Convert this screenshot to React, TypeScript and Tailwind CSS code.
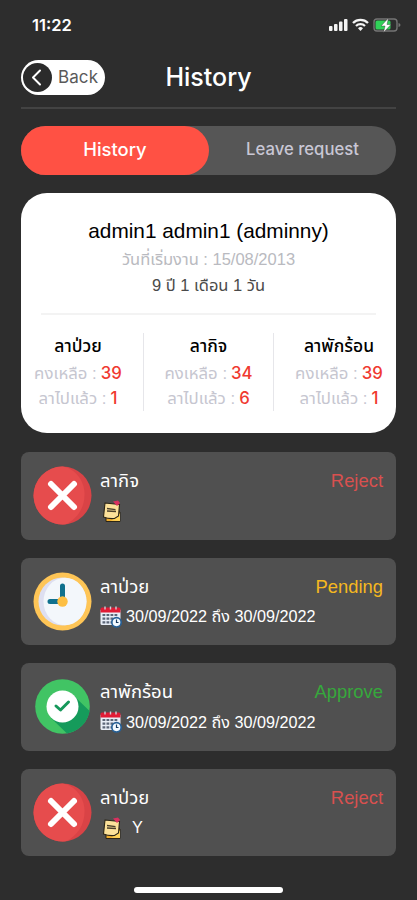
import React from 'react';

const thai = "font-['Liberation_Sans','Noto_Sans_Thai','Noto_Sans',sans-serif]";
const inter = "font-['Inter','Noto_Sans',sans-serif]";

type Status = 'Reject' | 'Pending' | 'Approve';

const balances = [
  { name: 'ลาป่วย', left: 39, used: 1 },
  { name: 'ลากิจ', left: 34, used: 6 },
  { name: 'ลาพักร้อน', left: 39, used: 1 },
];

const requests: { name: string; status: Status; detail: string; icon: 'note' | 'date' }[] = [
  { name: 'ลากิจ', status: 'Reject', detail: '', icon: 'note' },
  { name: 'ลาป่วย', status: 'Pending', detail: '30/09/2022 ถึง 30/09/2022', icon: 'date' },
  { name: 'ลาพักร้อน', status: 'Approve', detail: '30/09/2022 ถึง 30/09/2022', icon: 'date' },
  { name: 'ลาป่วย', status: 'Reject', detail: 'Y', icon: 'note' },
];

const statusColor: Record<Status, string> = {
  Reject: 'text-[#d9504f]',
  Pending: 'text-[#f5b81f]',
  Approve: 'text-[#36a83c]',
};

export default function App() {
  return (
    <div className={`flex h-[900px] w-[417px] flex-col overflow-hidden bg-[#2d2d2d] px-[21px] text-white ${thai}`}>
      <StatusBar />

      <header className="mt-[9px] grid h-9 grid-cols-[84px_1fr_84px] items-center">
        <button className={`flex h-[35px] w-[84px] items-center rounded-full bg-white pl-[2px] text-[#5a5a5a] ${inter}`}>
          <span className="flex h-[29px] w-[29px] items-center justify-center rounded-full bg-[#2b2b2b]">
            <svg viewBox="0 0 29 29" className="h-[29px] w-[29px]" fill="none" stroke="#fff" strokeWidth="2" strokeLinecap="round" strokeLinejoin="round">
              <path d="M17 7.500l-7 7 7 7" />
            </svg>
          </span>
          <span className="ml-[6px] text-[17px] tracking-[0.1px]">Back</span>
        </button>
        <h1 className={`text-center text-[25px] font-medium ${inter}`}>History</h1>
      </header>
      <div className="mt-[12px] h-[2px] shrink-0 bg-[#434343]" />

      <nav className={`mt-[17px] flex h-[49px] shrink-0 rounded-full bg-[#565656] ${inter}`}>
        <button className="w-[188px] rounded-full bg-[#ff5144] pb-[2px] text-[18.4px] font-medium">History</button>
        <button className="flex-1 pb-[1px] text-[16.7px] font-medium text-[#c9c7d5]">Leave request</button>
      </nav>

      <section className="mt-[18px] flex h-[240px] shrink-0 flex-col rounded-[26px] bg-white pt-[24px] text-center">
        <h2 className="text-[20.8px] leading-7 text-black">admin1 admin1 (adminny)</h2>
        <p className="h-[29px] text-[16.5px] leading-[29px] text-[#b9bac0]">วันที่เริ่มงาน : 15/08/2013</p>
        <p className="h-[22px] text-[16.5px] leading-[22px] text-[#4a4a4a]">9 ปี 1 เดือน 1 วัน</p>
        <div className="mx-5 mt-[17px] h-[2px] bg-[#f3f3f3]" />
        <div className="mx-[-8px] mt-[18px] grid h-[78px] grid-cols-[131px_130px_130px] divide-x divide-[#e6e6ea]">
          {balances.map((b) => (
            <div key={b.name}>
              <div className="h-[27px] text-[17.5px] font-medium leading-[27px] text-black">{b.name}</div>
              <Balance label="คงเหลือ" value={b.left} />
              <Balance label="ลาไปแล้ว" value={b.used} />
            </div>
          ))}
        </div>
      </section>

      <ul className="mt-[19px] flex flex-col gap-[18px]">
        {requests.map((r, i) => (
          <li key={i} className="flex h-[87.5px] rounded-[8px] bg-[#505050] pl-[12px] pr-[13px]">
            <StatusIcon status={r.status} />
            <div className="ml-[8px] flex-1 pt-[14px]">
              <div className="flex h-[30px] items-center justify-between">
                <span className="text-[18.5px]">{r.name}</span>
                <span className={`text-[18.4px] ${statusColor[r.status]}`}>{r.status}</span>
              </div>
              <div className="flex h-[30px] items-center text-[16.2px]">
                {r.icon === 'note' ? <NoteIcon /> : <CalendarIcon />}
                <span className={r.icon === 'note' ? 'ml-[8px]' : 'ml-[4px]'}>{r.detail}</span>
              </div>
            </div>
          </li>
        ))}
      </ul>

      <div className="mx-auto mt-[31px] h-[6px] w-[149px] shrink-0 rounded-full bg-white" />
    </div>
  );
}

function Balance({ label, value }: { label: string; value: number }) {
  return (
    <div className="flex h-[25px] items-center justify-center gap-[4px] pt-[2px] text-[16.8px] text-[#c6c6d0]">
      <span>{label} :</span>
      <span className={`font-medium text-[#f03a30] ${inter}`}>{value}</span>
    </div>
  );
}

function StatusBar() {
  return (
    <div className={`flex h-[50px] shrink-0 items-center justify-between pl-[11px] ${inter}`}>
      <span className="text-[16.5px] font-semibold">11:22</span>
      <svg viewBox="0 0 74 18" className="mr-[-6px] h-[18px] w-[74px]">
        <g fill="#f4f4f4">
          <rect x="1" y="10" width="3.5" height="5" rx="1" />
          <rect x="6" y="8" width="3.5" height="7" rx="1" />
          <rect x="11" y="5.500" width="3.500" height="9.500" rx="1" />
          <rect x="16" y="3" width="3.500" height="12" rx="1" />
        </g>
        <g fill="none" stroke="#f4f4f4" strokeWidth="2.300">
          <path d="M25 7a10.500 10.500 0 0 1 15 0" />
          <path d="M28 10a6.500 6.500 0 0 1 9 0" />
        </g>
        <path d="M30 12.300a3.500 3.500 0 0 1 5 0l-2.500 2.700z" fill="#f4f4f4" />
        <rect x="46" y="3" width="23" height="12" rx="3" fill="#2d2d2d" stroke="#747474" strokeWidth="1.400" />
        <path d="M70.500 7v4q2-.5 2-2t-2-2" fill="#747474" />
        <rect x="47.500" y="4.500" width="15" height="9" rx="1.500" fill="#30d158" />
        <path d="M60.500 2l-7.500 8h4l-1.500 6.500 7.500-8h-4z" fill="#fff" stroke="#2d2d2d" strokeWidth=".4" />
      </svg>
    </div>
  );
}

function StatusIcon({ status }: { status: Status }) {
  const cls = 'mt-[14px] h-[59px] w-[59px] shrink-0';
  if (status === 'Pending') {
    return (
      <svg viewBox="0 0 59 59" className={cls}>
        <circle cx="29.500" cy="29.500" r="29" fill="#fec556" />
        <circle cx="29.500" cy="29.500" r="24" fill="#dedff0" />
        <ellipse cx="32" cy="29.500" rx="21.500" ry="23.700" fill="#f3f7fb" />
        <path d="M29.500 29.500V14M29.500 29.500H17" stroke="#10718e" strokeWidth="5" strokeLinecap="round" />
        <circle cx="29.500" cy="29.500" r="5.200" fill="#fdbf43" />
      </svg>
    );
  }
  if (status === 'Approve') {
    return (
      <svg viewBox="0 0 59 59" className={cls}>
        <circle cx="29.500" cy="29.500" r="27.300" fill="#41c464" />
        <path d="M40.500 18.500L56.600 34A27.300 27.300 0 0 1 34 56.400L18 41z" fill="#159b5b" />
        <circle cx="29.500" cy="29.500" r="16" fill="#fff" />
        <path d="M23 29l4.500 4 8-8" fill="none" stroke="#16985a" strokeWidth="3" strokeLinecap="round" strokeLinejoin="round" />
      </svg>
    );
  }
  return (
    <svg viewBox="0 0 59 59" className={cls}>
      <circle cx="29.500" cy="29.500" r="29" fill="#d94346" />
      <path d="M29.500.5A29 29 0 1 0 33 58.300C45 52 52 41 51.500 27 51 15 43 3 29.500.5" fill="#e64c4d" />
      <path d="M18 18l23 23M41 18L18 41" stroke="#fff" strokeWidth="6" strokeLinecap="round" />
    </svg>
  );
}

function NoteIcon() {
  return (
    <svg viewBox="0 0 24 24" className="h-6 w-6">
      <path d="M6 9l14 4v9.500H6z" fill="#f0ad2d" stroke="#2b2517" />
      <path d="M20 22l-9-.5 9-7z" fill="#ffd45c" />
      <path d="M5 4l14.500 1.500-1 11.500 -4 2.500q-6 .5-11-1.500z" fill="#fce19a" stroke="#2b2517" strokeWidth="1.100" />
      <path d="M7 9.500l8.500 1.200M7 12l9 .5" stroke="#4b402b" strokeWidth="1.300" />
      <path d="M13 2.500l5-1 2 2.500-3 3z" fill="#d9305f" />
    </svg>
  );
}

function CalendarIcon() {
  return (
    <svg viewBox="0 0 22 22" className="h-[22px] w-[22px]">
      <rect x=".5" y="3" width="20" height="16" rx="1.500" fill="#e9eef7" />
      <path d="M.5 3q0-1.500 1.500-1.500h17q1.500 0 1.500 1.500v3.500H.5z" fill="#e01b35" />
      <path d="M5 .5v3M10.500.5v3M16 .5v3" stroke="#cbd1dc" strokeWidth="1.400" />
      <g fill="none" stroke="#5c6678" strokeWidth="2.200">
        <path d="M2.500 9h16M2.500 12.700h12M2.500 16.400h9" strokeDasharray="2.800 1.200" />
      </g>
      <circle cx="16.500" cy="16.300" r="4.700" fill="#f4faff" stroke="#276096" strokeWidth="1.700" />
      <path d="M16.500 13.500v3h2" stroke="#193c61" fill="none" strokeWidth="1.200" />
    </svg>
  );
}
